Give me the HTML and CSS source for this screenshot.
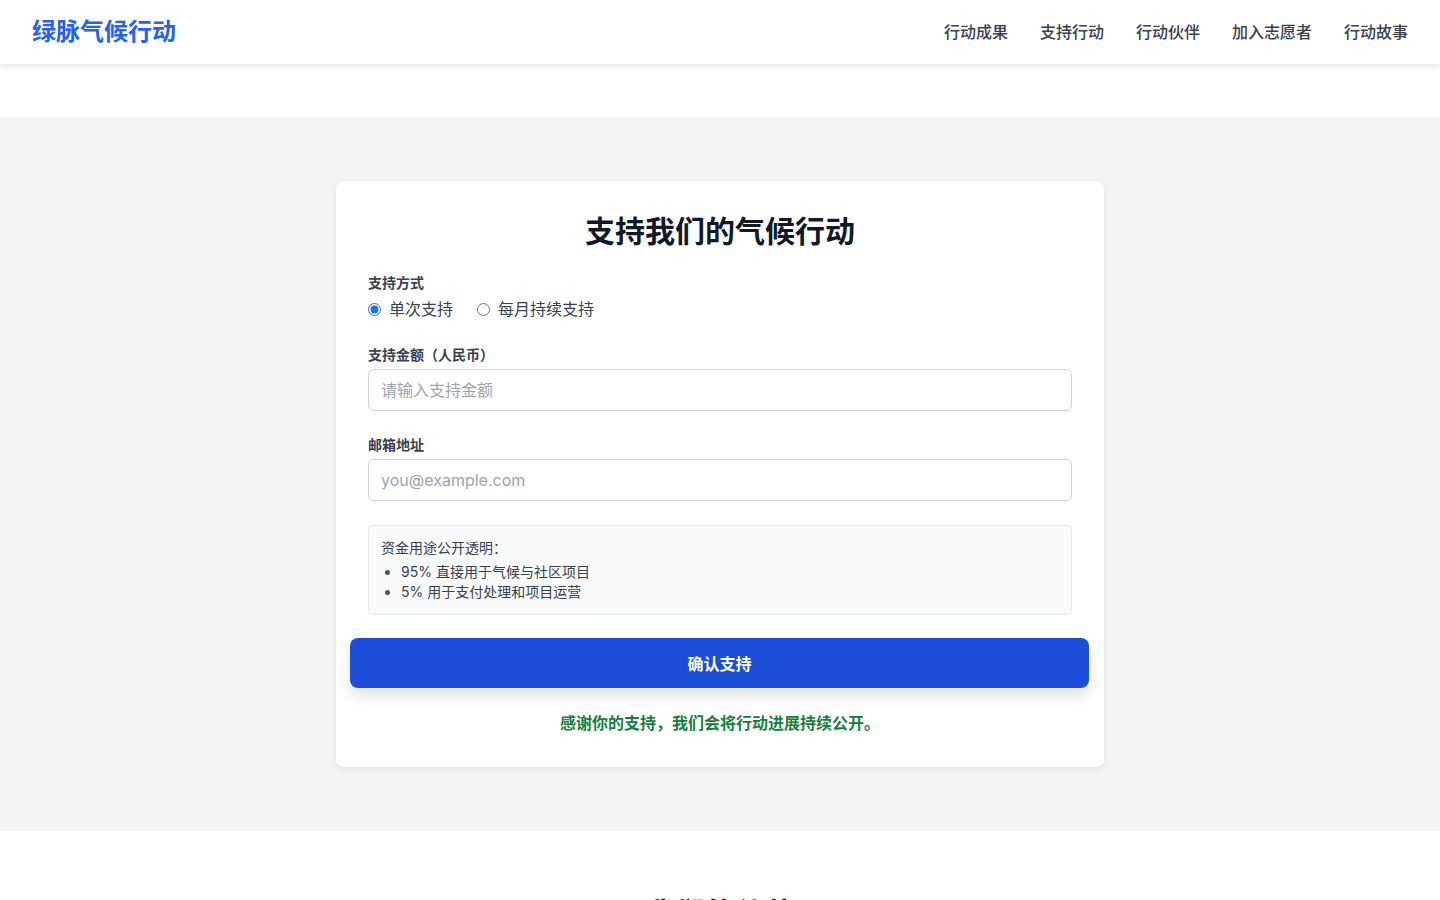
FILE: index.html
```html
<!DOCTYPE html>
<html lang="zh-CN">
<head>
    <meta charset="UTF-8">
    <title>绿脉气候行动 - 支持我们</title>
    <link rel="stylesheet" href="styles.css">
</head>
<body>

<header class="nav">
    <div class="logo">绿脉气候行动</div>
    <ul class="menu">
        <li><a href="#">行动成果</a></li>
        <li><a href="#">支持行动</a></li>
        <li><a href="#">行动伙伴</a></li>
        <li><a href="#">加入志愿者</a></li>
        <li><a href="#">行动故事</a></li>
    </ul>
</header>

<section class="support">
    <div class="card">
        <h1 class="title">支持我们的气候行动</h1>

        <div class="field">
            <div class="label">支持方式</div>
            <div class="radios">
                <label><input type="radio" name="type" checked> 单次支持</label>
                <label><input type="radio" name="type"> 每月持续支持</label>
            </div>
        </div>

        <div class="field">
            <div class="label">支持金额（人民币）</div>
            <input class="txt" type="text" placeholder="请输入支持金额">
        </div>

        <div class="field">
            <div class="label">邮箱地址</div>
            <input class="txt" type="text" placeholder="you@example.com">
        </div>

        <div class="note">
            <p>资金用途公开透明：</p>
            <ul>
                <li>95% 直接用于气候与社区项目</li>
                <li>5% 用于支付处理和项目运营</li>
            </ul>
        </div>

        <button class="submit" type="button">确认支持</button>

        <p class="thanks">感谢你的支持，我们会将行动进展持续公开。</p>
    </div>
</section>

<section class="partners">
    <h2>我们的伙伴</h2>
</section>

</body>
</html>
```

FILE: styles.css
```css
* {
    padding: 0;
    margin: 0;
    box-sizing: border-box;
}
body {
    font-family: Inter, "Noto Sans CJK SC", sans-serif;
    color: #111827;
    background: #fff;
}
.nav {
    height: 64px;
    padding: 0 32px 1px;
    display: flex;
    align-items: center;
    justify-content: space-between;
    background: #fff;
    box-shadow: 0 2px 6px rgba(0, 0, 0, .12);
    position: relative;
    z-index: 10;
}
.logo {
    font-size: 24px;
    line-height: 32px;
    font-weight: 700;
    color: #2563eb;
}
.menu {
    display: flex;
    gap: 32px;
    list-style: none;
    line-height: 24px;
    padding-top: 1px;
}
.menu a {
    font-size: 16px;
    font-weight: 500;
    color: #374151;
    text-decoration: none;
}
.support {
    margin-top: 53px;
    padding: 64px 0;
    background: #f3f4f6;
}
.card {
    width: 768px;
    margin: 0 auto;
    padding: 32px;
    background: #fff;
    border-radius: 8px;
    box-shadow: 0 2px 6px rgba(0, 0, 0, .08);
}
.title {
    font-size: 30px;
    line-height: 36px;
    font-weight: 700;
    text-align: center;
    margin-bottom: 24px;
}
.field {
    margin-bottom: 24px;
}
.label {
    font-size: 14px;
    line-height: 20px;
    font-weight: 600;
    color: #374151;
    margin-bottom: 4px;
}
.radios {
    display: flex;
    gap: 24px;
    font-size: 16px;
    line-height: 24px;
    color: #374151;
}
.radios label {
    display: flex;
    align-items: center;
    gap: 8px;
}
.radios input {
    width: 13px;
    height: 13px;
    margin: 0;
    accent-color: #1a73e8;
}
.txt {
    display: block;
    width: 100%;
    height: 42px;
    padding: 8px 12px;
    font-family: inherit;
    font-size: 16px;
    border: 1px solid #d1d5db;
    border-radius: 6px;
    outline: none;
}
.txt::placeholder {
    color: #9ca3af;
}
.note {
    padding: 12px;
    font-size: 14px;
    line-height: 20px;
    color: #374151;
    background: #f9fafb;
    border: 1px solid #e5e7eb;
    border-radius: 6px;
    margin-bottom: 23px;
}
.note ul {
    margin-top: 4px;
    padding-left: 20px;
}
.note li::marker {
    color: #4b5563;
}
.submit {
    display: block;
    width: calc(100% + 35px);
    height: 50px;
    margin: 0 -18px;
    font-family: inherit;
    font-size: 16px;
    font-weight: 600;
    color: #fff;
    background: #1d4ed8;
    border: none;
    border-radius: 8px;
    box-shadow: 0 8px 14px rgba(0, 0, 0, .12);
    cursor: pointer;
}
.thanks {
    margin-top: 23px;
    font-size: 16px;
    line-height: 24px;
    font-weight: 600;
    color: #15803d;
    text-align: center;
}
.partners {
    padding: 64px 0;
    text-align: center;
}
.partners h2 {
    font-size: 30px;
    line-height: 36px;
    font-weight: 700;
}
```
